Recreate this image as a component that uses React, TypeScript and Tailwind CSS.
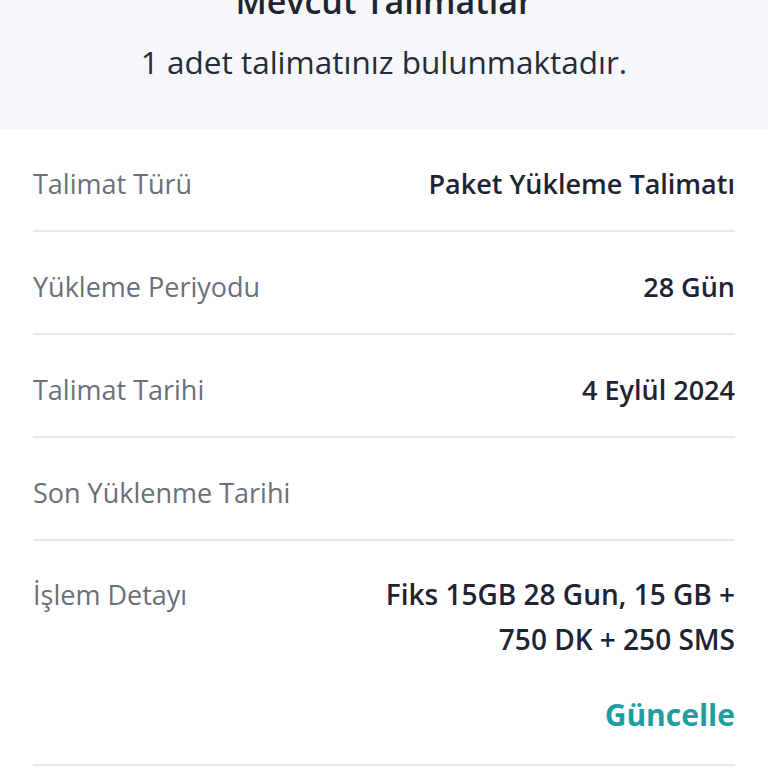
import React from "react";

const rows: { label: string; value: string[] }[] = [
  { label: "Talimat Türü", value: ["Paket Yükleme Talimatı"] },
  { label: "Yükleme Periyodu", value: ["28 Gün"] },
  { label: "Talimat Tarihi", value: ["4 Eylül 2024"] },
  { label: "Son Yüklenme Tarihi", value: [] },
];

export default function App() {
  return (
    <div className="w-[768px] h-[768px] overflow-hidden bg-white" style={{ fontFamily: "'Open Sans', 'Noto Sans', sans-serif" }}>
      <div className="h-[129px] bg-[#f5f7fa] flex flex-col items-center">
        <div className="mt-[-19px] h-[40px] leading-[40px] text-[34px] font-semibold text-[#1f2433]">Mevcut Talimatlar</div>
        <div className="mt-[18px] leading-[45px] text-[31.5px] text-[#262b3a]">1 adet talimatınız bulunmaktadır.</div>
      </div>
      <div className="px-[33px]">
        {rows.map((r) => (
          <div key={r.label} className="flex justify-between pt-[32px] pb-[25px] border-b-2 border-[#e6e8eb] leading-[45px] text-[27px] h-[103px]">
            <span className="text-[#6b6f7a]">{r.label}</span>
            <span className="font-semibold text-[#1f2433]">{r.value[0]}</span>
          </div>
        ))}
        <div className="flex justify-between pt-[31px] pb-[27px] border-b-2 border-[#e6e8eb] leading-[45px] text-[27px]">
          <span className="text-[#6b6f7a]">İşlem Detayı</span>
          <div className="flex flex-col items-end">
            <span className="font-semibold text-[28px] text-[#1f2433] text-right">Fiks 15GB 28 Gun, 15 GB +</span>
            <span className="font-semibold text-[28px] text-[#1f2433] text-right">750 DK + 250 SMS</span>
            <span className="mt-[30px] font-bold text-[30px] text-[#1f9ea0]">Güncelle</span>
          </div>
        </div>
      </div>
    </div>
  );
}
